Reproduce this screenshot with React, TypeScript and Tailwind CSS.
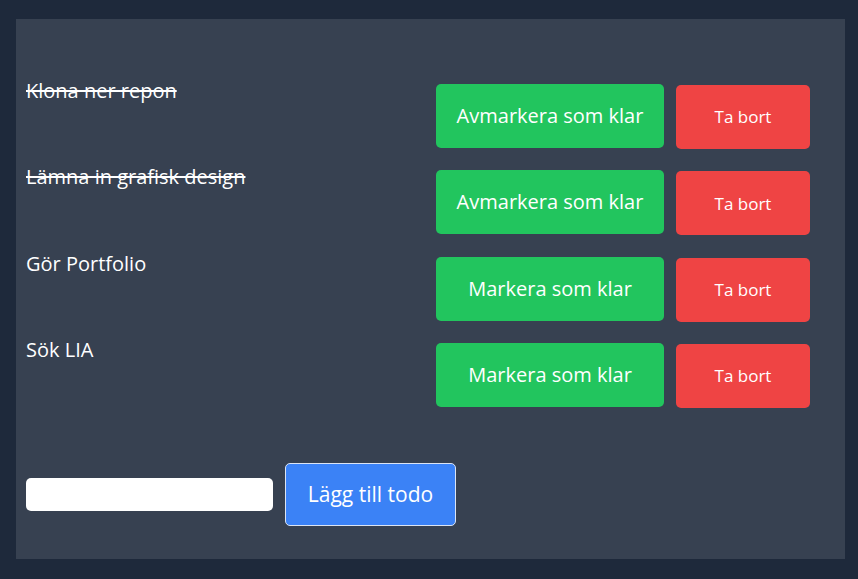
import React from "react";

const todos = [
  { text: "Klona ner repon", done: true },
  { text: "Lämna in grafisk design", done: true },
  { text: "Gör Portfolio", done: false },
  { text: "Sök LIA", done: false },
];

export default function App() {
  return (
    <div
      className="min-h-screen w-full bg-[#1e293b] pt-[19px] pl-[16px]"
      style={{ fontFamily: '"Open Sans", "Noto Sans", sans-serif' }}
    >
      <div className="w-[829px] h-[540px] bg-[#374151] pt-[58px] pl-[10px] pr-[35px] text-white">
        <ul className="flex flex-col gap-[14.33px]">
          {todos.map((t) => (
            <li key={t.text} className="flex items-start justify-between">
              <p
                className={
                  "text-[20px] leading-[28px] " +
                  (t.done ? "line-through decoration-[2px]" : "")
                }
              >
                {t.text}
              </p>
              <div className="mt-[7px] flex items-start gap-[12px]">
                <button className="h-[64px] w-[228px] rounded-[5px] bg-[#22c55e] text-[20px] text-white">
                  {t.done ? "Avmarkera som klar" : "Markera som klar"}
                </button>
                <button className="mt-px h-[64px] w-[134px] rounded-[5px] bg-[#ef4444] text-[17px] text-white">
                  Ta bort
                </button>
              </div>
            </li>
          ))}
        </ul>
        <div className="mt-[55px] flex items-center gap-[12px]">
          <input
            type="text"
            className="h-[33px] w-[247px] rounded-[5px] bg-white px-2 text-black outline-none"
          />
          <button className="h-[63px] w-[171px] rounded-[5px] border border-[#dbe4f3] bg-[#3b82f6] text-[21px] text-white">
            Lägg till todo
          </button>
        </div>
      </div>
    </div>
  );
}
